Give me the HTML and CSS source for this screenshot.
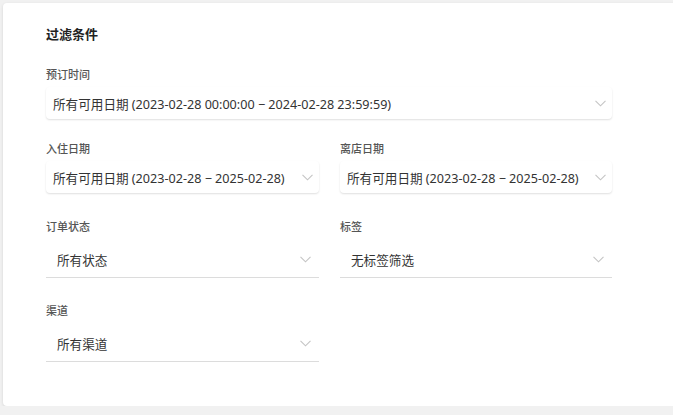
FILE: index.html
```html
<!DOCTYPE html>
<html lang="zh-CN">
<head>
<meta charset="utf-8">
<link rel="stylesheet" href="styles.css">
</head>
<body>
<div class="card">
  <h2 class="title">过滤条件</h2>
  <div class="form">
    <div class="field full">
      <div class="label">预订时间</div>
      <div class="select date">
        <span class="value">所有可用日期 (2023-02-28 00:00:00 − 2024-02-28 23:59:59)</span>
        <svg class="chev" width="11" height="7" viewBox="0 0 11 7"><path d="M0.5 0.8 L5.5 5.8 L10.5 0.8" fill="none" stroke="#c4c4c4" stroke-width="1.1"/></svg>
      </div>
    </div>
    <div class="field">
      <div class="label">入住日期</div>
      <div class="select date">
        <span class="value">所有可用日期 (2023-02-28 − 2025-02-28)</span>
        <svg class="chev" width="11" height="7" viewBox="0 0 11 7"><path d="M0.5 0.8 L5.5 5.8 L10.5 0.8" fill="none" stroke="#c4c4c4" stroke-width="1.1"/></svg>
      </div>
    </div>
    <div class="field">
      <div class="label">离店日期</div>
      <div class="select date">
        <span class="value">所有可用日期 (2023-02-28 − 2025-02-28)</span>
        <svg class="chev" width="11" height="7" viewBox="0 0 11 7"><path d="M0.5 0.8 L5.5 5.8 L10.5 0.8" fill="none" stroke="#c4c4c4" stroke-width="1.1"/></svg>
      </div>
    </div>
    <div class="field row3">
      <div class="label">订单状态</div>
      <div class="select line">
        <span class="value">所有状态</span>
        <svg class="chev" width="11" height="7" viewBox="0 0 11 7"><path d="M0.5 0.8 L5.5 5.8 L10.5 0.8" fill="none" stroke="#c4c4c4" stroke-width="1.1"/></svg>
      </div>
    </div>
    <div class="field row3">
      <div class="label">标签</div>
      <div class="select line">
        <span class="value">无标签筛选</span>
        <svg class="chev" width="11" height="7" viewBox="0 0 11 7"><path d="M0.5 0.8 L5.5 5.8 L10.5 0.8" fill="none" stroke="#c4c4c4" stroke-width="1.1"/></svg>
      </div>
    </div>
    <div class="field row4">
      <div class="label">渠道</div>
      <div class="select line">
        <span class="value">所有渠道</span>
        <svg class="chev" width="11" height="7" viewBox="0 0 11 7"><path d="M0.5 0.8 L5.5 5.8 L10.5 0.8" fill="none" stroke="#c4c4c4" stroke-width="1.1"/></svg>
      </div>
    </div>
  </div>
</div>
</body>
</html>
```

FILE: styles.css
```css
html, body {
  margin: 0;
  padding: 0;
  background: #f1f1f1;
  overflow: hidden;
}
body {
  padding: 3px 0 0 3px;
  font-family: "Noto Sans", "Noto Sans CJK SC", sans-serif;
  color: #333;
}
.card {
  background: #fff;
  border-radius: 4px;
  margin-right: -20px;
  height: 403px;
  box-sizing: border-box;
  padding: 22px 0 0 43px;
  box-shadow: 0 1px 3px rgba(0, 0, 0, 0.12);
}
.title {
  margin: 0;
  font-size: 13px;
  line-height: 18px;
  font-weight: 700;
  color: #222;
}
.form {
  margin-top: 24px;
  width: 566px;
  display: grid;
  grid-template-columns: 273px 272px;
  column-gap: 21px;
  row-gap: 22px;
}
.field.full {
  grid-column: 1 / 3;
}
.field.row3 {
  margin-top: 4px;
}
.field.row4 {
  margin-top: 3px;
}
.label {
  font-size: 11px;
  line-height: 16px;
  color: #555;
  font-weight: 500;
}
.select {
  display: flex;
  align-items: center;
  justify-content: space-between;
  box-sizing: border-box;
  font-size: 12.6px;
  color: #333;
}
.select.date {
  margin-top: 4px;
  height: 32px;
  padding: 1px 6px 0 7px;
  border-radius: 4px;
  box-shadow: 0 1px 2px rgba(0, 0, 0, 0.13);
}
.select.line {
  margin-top: 4px;
  height: 39px;
  padding: 3px 8px 0 11px;
  border-bottom: 1px solid #dcdcdc;
}
.value {
  white-space: nowrap;
}
.chev {
  flex: none;
}
```
